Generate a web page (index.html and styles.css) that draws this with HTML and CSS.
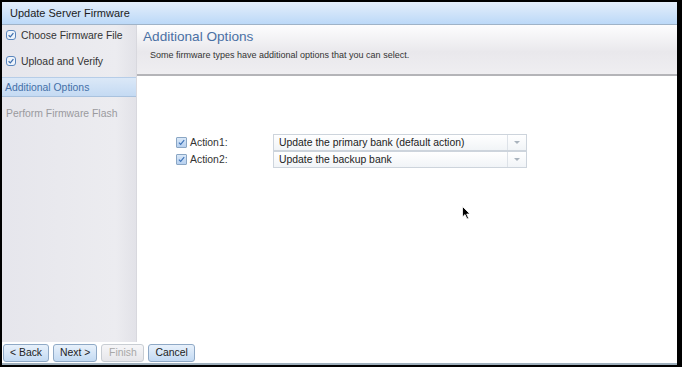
FILE: index.html
```html
<!DOCTYPE html>
<html lang="en">
  <head>
    <meta charset="UTF-8" />
    <title>Update Server Firmware</title>
    <link rel="stylesheet" href="styles.css">
  </head>
  <body>
    <div class="window">
      <div class="titlebar">Update Server Firmware</div>
      <div class="body">
        <nav class="steps">
          <div class="step done">
            <svg class="tick" viewBox="0 0 10 10"><rect x="0.5" y="0.5" width="9" height="9" rx="2.5" fill="#eef4fb" stroke="#5b86bd"/><path d="M2.6 5.2 L4.3 6.9 L7.4 3.2" fill="none" stroke="#3f6fae" stroke-width="1.3"/></svg>
            Choose Firmware File
          </div>
          <div class="step done">
            <svg class="tick" viewBox="0 0 10 10"><rect x="0.5" y="0.5" width="9" height="9" rx="2.5" fill="#eef4fb" stroke="#5b86bd"/><path d="M2.6 5.2 L4.3 6.9 L7.4 3.2" fill="none" stroke="#3f6fae" stroke-width="1.3"/></svg>
            Upload and Verify
          </div>
          <div class="step current">Additional Options</div>
          <div class="step todo">Perform Firmware Flash</div>
        </nav>
        <section class="main">
          <div class="main-head">
            <h2>Additional Options</h2>
            <p>Some firmware types have additional options that you can select.</p>
          </div>
          <div class="options">
            <div class="row">
              <label class="check">
                <span class="box"><svg viewBox="0 0 11 11"><path d="M2.3 5.6 L4.5 7.8 L8.8 2.6" fill="none" stroke="#3d73b8" stroke-width="1.4"/></svg></span>
                Action1:
              </label>
              <div class="select">
                <span class="value">Update the primary bank (default action)</span>
                <span class="arrow"></span>
              </div>
            </div>
            <div class="row">
              <label class="check">
                <span class="box"><svg viewBox="0 0 11 11"><path d="M2.3 5.6 L4.5 7.8 L8.8 2.6" fill="none" stroke="#3d73b8" stroke-width="1.4"/></svg></span>
                Action2:
              </label>
              <div class="select">
                <span class="value">Update the backup bank</span>
                <span class="arrow"></span>
              </div>
            </div>
            <svg class="cursor" viewBox="0 0 9 14"><path d="M0.5 0.5 L0.5 11 L3 8.6 L5 13 L6.6 12.2 L4.7 8 L8 8 Z" fill="#000" stroke="#fff" stroke-width="0.8"/></svg>
          </div>
        </section>
      </div>
      <div class="footer">
        <button class="btn">&lt; Back</button>
        <button class="btn">Next &gt;</button>
        <button class="btn" disabled>Finish</button>
        <button class="btn">Cancel</button>
      </div>
    </div>
  </body>
</html>
```

FILE: styles.css
```css
* {
  box-sizing: border-box;
}
html,
body {
  height: 100%;
}
body {
  margin: 0;
  padding: 2px 5px 2px 2px;
  background: #000;
  font-family: "Liberation Sans", Arial, sans-serif;
  font-size: 10.4px;
  color: #222;
}
.window {
  height: 100%;
  display: flex;
  flex-direction: column;
  background: #fff;
  border-bottom: 2px solid #9fb0bd;
}
.titlebar {
  height: 23px;
  flex: none;
  padding: 0 8px;
  line-height: 22px;
  font-size: 11px;
  color: #1c1c1c;
  background: linear-gradient(#e4eefb, #bcd9f8);
  border-bottom: 1px solid #9fb3c8;
}
.body {
  flex: 1;
  display: flex;
  min-height: 0;
}
/* Wizard steps */
.steps {
  width: 135px;
  flex: none;
  background: linear-gradient(90deg, #e6e6ec, #ececf0 85%, #e2e2e8);
  border-right: 1px solid #d8d8de;
}
.step {
  height: 20px;
  margin-bottom: 6px;
  display: flex;
  align-items: center;
  padding-left: 4px;
  color: #333;
}
.step .tick {
  width: 10px;
  height: 10px;
  margin-right: 5px;
}
.step.current {
  padding-left: 3px;
  color: #4470a8;
  background: linear-gradient(#dbe8f7, #c4daf3);
  border-top: 1px solid #b6cde8;
  border-bottom: 1px solid #a9c2de;
}
.step.todo {
  color: #9a9a9e;
}
/* Main panel */
.main {
  flex: 1;
  display: flex;
  flex-direction: column;
}
.main-head {
  height: 51px;
  padding: 4px 6px 0;
  background: linear-gradient(#fdfdfe, #e9e8ec 55%, #efeef1);
  border-bottom: 2px solid #b4b4b8;
}
.main-head h2 {
  margin: 0;
  font-size: 13.6px;
  font-weight: 400;
  color: #4a70a4;
}
.main-head p {
  margin: 6px 0 0 7px;
  font-size: 9px;
  color: #333;
}
.options {
  position: relative;
  flex: 1;
  padding: 58px 0 0 39px;
}
.row {
  display: flex;
  align-items: center;
  height: 17px;
}
.check {
  width: 97px;
  display: flex;
  align-items: center;
  color: #333;
}
.box {
  width: 11px;
  height: 11px;
  margin-right: 3px;
  border: 1px solid #8aa6c4;
  border-radius: 1px;
  background: linear-gradient(#d9e8f8, #b7d0ef);
}
.box svg {
  display: block;
  width: 9px;
  height: 9px;
}
.select {
  width: 254px;
  height: 17px;
  display: flex;
  border: 1px solid #cdd4dc;
  background: linear-gradient(#ffffff, #f1f4f7);
}
.select .value {
  flex: 1;
  padding-left: 5px;
  line-height: 15px;
  color: #222;
}
.select .arrow {
  width: 19px;
  position: relative;
  border-left: 1px solid #dde2e8;
}
.select .arrow::after {
  content: "";
  position: absolute;
  left: 6px;
  top: 6px;
  border-left: 3px solid transparent;
  border-right: 3px solid transparent;
  border-top: 3px solid #a9b3bd;
}
.cursor {
  position: absolute;
  left: 325px;
  top: 130px;
  width: 9px;
  height: 14px;
}
/* Button bar */
.footer {
  flex: none;
  height: 21px;
  display: flex;
  align-items: center;
  gap: 4px;
  padding: 0 1px;
}
.btn {
  height: 18px;
  min-width: 43px;
  padding: 0 6px;
  font-family: inherit;
  font-size: 10.4px;
  color: #222;
  border: 1px solid #8fa9c6;
  border-radius: 3px;
  background: linear-gradient(#e8f1fb, #c3daf3);
}
.btn:disabled {
  color: #a8a8a8;
  border-color: #c8cdd3;
  background: linear-gradient(#f6f6f8, #e6e6ea);
}
```
